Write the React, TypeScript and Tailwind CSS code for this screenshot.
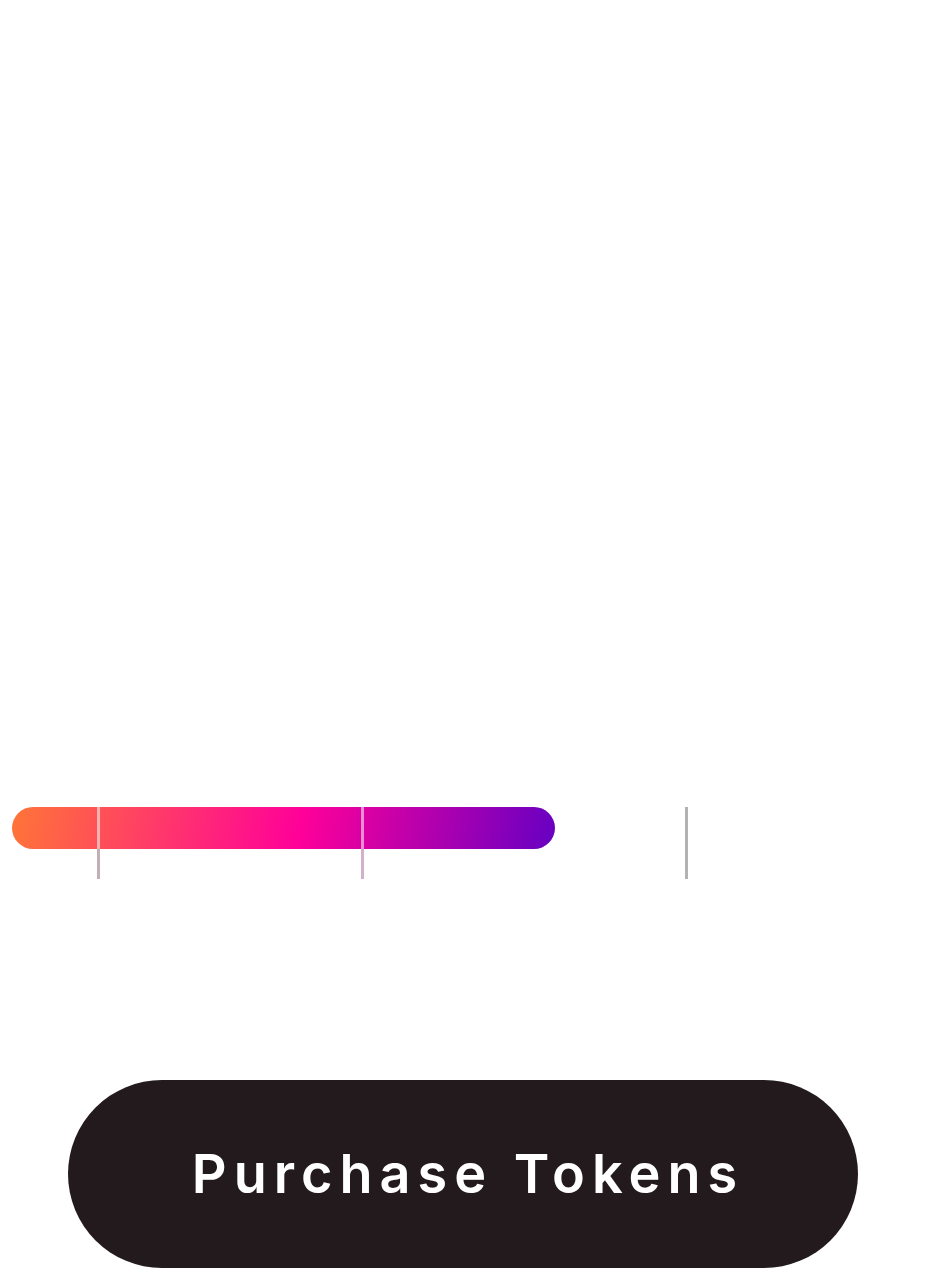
import React from "react";

export default function App() {
  const ticks = [
    { x: 98, below: "bg-[#c3b0b6]" },
    { x: 362, below: "bg-[#d2b2cb]" },
    { x: 686, below: "bg-[#b2b2b2]" },
  ];
  return (
    <div className="w-full h-[1269px] bg-white overflow-hidden flex flex-col" style={{ fontFamily: "Inter, 'Noto Sans', sans-serif" }}>
      <div className="pt-[807px]">
        <div className="relative h-[72px]">
          <div className="ml-[12px] w-[543px] h-[42px] rounded-full bg-[linear-gradient(100deg,#ff7538_0%,#ff0099_53%,#6700c2_100%)]" />
          {ticks.map((t, i) => (
            <div
              key={t.x}
              className="absolute top-0 h-[72px] w-[3px] flex flex-col"
              style={{ left: t.x - 1 }}
            >
              <div className={i < 2 ? "h-[42px] bg-white/55" : "h-[42px] bg-[#b2b2b2]"} />
              <div className={`flex-1 ${t.below}`} />
            </div>
          ))}
        </div>
      </div>
      <div className="mt-[201px] ml-[68px] w-[790px] h-[188px] rounded-full bg-[#231a1e] flex items-center justify-center">
        <span className="text-white text-[54px] font-semibold tracking-[7px] leading-none pl-[10px]">Purchase Tokens</span>
      </div>
    </div>
  );
}
